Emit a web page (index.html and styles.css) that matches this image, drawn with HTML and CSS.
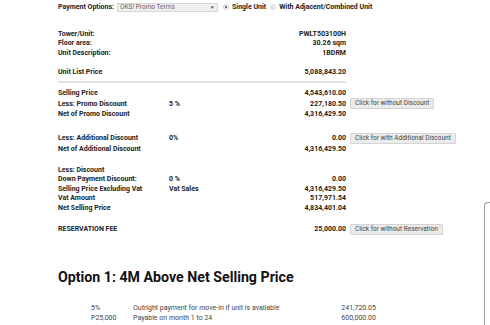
FILE: index.html
```html
<!DOCTYPE html>
<html>
<head>
<meta charset="utf-8">
<link rel="stylesheet" href="styles.css">
</head>
<body>
<div class="page">
  <div class="topbar">
    <span class="b">Payment Options:</span>
    <span class="select"><span class="sel-text">OKS! Promo Terms</span><span class="arrow">&#9662;</span></span>
    <span class="radio checked"></span>
    <span class="b">Single Unit</span>
    <span class="radio"></span>
    <span class="b">With Adjacent/Combined Unit</span>
  </div>

  <div class="sheet">
    <div class="row"><span>Tower/Unit:</span><span></span><span class="v">PWLT503100H</span></div>
    <div class="row"><span>Floor area:</span><span></span><span class="v">30.26 sqm</span></div>
    <div class="row"><span>Unit Description:</span><span></span><span class="v">1BDRM</span></div>
    <div class="row"></div>
    <div class="row"><span>Unit List Price</span><span></span><span class="v">5,088,843.20</span></div>
    <div class="rule"></div>
    <div class="row"><span>Selling Price</span><span></span><span class="v">4,543,610.00</span></div>
    <div class="row tall"><span>Less: Promo Discount</span><span>5 %</span><span class="v">227,180.50</span><span><button class="btn">Click for without Discount</button></span></div>
    <div class="row"><span>Net of Promo Discount</span><span></span><span class="v">4,316,429.50</span></div>
    <div class="row spacer"></div>
    <div class="row tall"><span>Less: Additional Discount</span><span>0%</span><span class="v">0.00</span><span><button class="btn">Click for with Additional Discount</button></span></div>
    <div class="row"><span>Net of Additional Discount</span><span></span><span class="v">4,316,429.50</span></div>
    <div class="row gap"></div>
    <div class="row"><span>Less: Discount</span></div>
    <div class="row"><span>Down Payment Discount:</span><span>0 %</span><span class="v">0.00</span></div>
    <div class="row"><span>Selling Price Excluding Vat</span><span>Vat Sales</span><span class="v">4,316,429.50</span></div>
    <div class="row"><span>Vat Amount</span><span></span><span class="v">517,971.54</span></div>
    <div class="row"><span>Net Selling Price</span><span></span><span class="v">4,834,401.04</span></div>
    <div class="row gap2"></div>
    <div class="row tall"><span>RESERVATION FEE</span><span></span><span class="v">25,000.00</span><span><button class="btn">Click for without Reservation</button></span></div>
  </div>

  <h2 class="heading">Option 1: 4M Above Net Selling Price</h2>

  <div class="terms">
    <div class="trow"><span>5%</span><span>Outright payment for move-in if unit is available</span><span class="v">241,720.05</span></div>
    <div class="trow"><span>P25,000</span><span>Payable on month 1 to 24</span><span class="v">600,000.00</span></div>
    <div class="trow"><span>P30,000</span><span>Payable on month 25 to 48</span><span class="v">720,000.00</span></div>
  </div>
</div>
<div class="side-frame"></div>
</body>
</html>
```

FILE: styles.css
```css
html, body {
  margin: 0;
  padding: 0;
  background: #fff;
  overflow: hidden;
}
body {
  font-family: Roboto, "Liberation Sans", Arial, sans-serif;
  color: #222;
  width: 490px;
  height: 325px;
  position: relative;
}
.page {
  padding: 2px 0 0 58px;
}
.b {
  font-weight: 700;
}
.topbar {
  display: flex;
  align-items: center;
  height: 10px;
  font-size: 7px;
  white-space: nowrap;
}
.select {
  display: flex;
  align-items: center;
  justify-content: space-between;
  box-sizing: border-box;
  width: 101px;
  height: 9px;
  margin-left: 3px;
  padding: 0 3px 0 2px;
  background: #efefef;
  border: 1px solid #d6d6d6;
  color: #666;
  font-size: 6.5px;
}
.arrow {
  font-size: 5px;
  color: #333;
}
.radio {
  width: 6px;
  height: 6px;
  border-radius: 50%;
  box-sizing: border-box;
  background: #e4e4e4;
  margin: 0 3px 0 4px;
}
.radio.checked {
  background: #fff;
  border: 1px solid #ccc;
  position: relative;
  margin-left: 5px;
}
.radio.checked::after {
  content: "";
  position: absolute;
  left: 1px;
  top: 1px;
  width: 2px;
  height: 2px;
  border-radius: 50%;
  background: #333;
}
.sheet {
  margin-top: 17px;
  font-size: 7px;
  font-weight: 700;
}
.row {
  display: grid;
  grid-template-columns: 111px 70px 107px auto;
  align-items: center;
  height: 9.6px;
  white-space: nowrap;
}
.row.tall {
  height: 12px;
}
.row.spacer {
  height: 13px;
}
.row.gap {
  height: 11px;
}
.row.gap2 {
  height: 10.6px;
}
.v {
  text-align: right;
}
.rule {
  width: 288px;
  height: 2px;
  background: #e2e2e2;
  margin: 4px 0 5px;
}
.btn {
  margin-left: 4px;
  height: 11px;
  padding: 0 4px;
  font-family: Roboto, "Liberation Sans", Arial, sans-serif;
  font-size: 6.5px;
  font-weight: 400;
  color: #444;
  background: #ebebeb;
  border: 1px solid #d4d4d4;
  border-radius: 1px;
  line-height: 9px;
  display: block;
}
.heading {
  margin: 34px 0 0;
  font-size: 14.2px;
  line-height: 16px;
  font-weight: 700;
  color: #111;
}
.terms {
  margin-top: 18px;
  padding-left: 33px;
  font-size: 7px;
  color: #444;
}
.trow {
  display: grid;
  grid-template-columns: 42px 180px 63px;
  grid-template-rows: 10px;
  align-items: center;
  width: 285px;
  white-space: nowrap;
}
.side-frame {
  position: absolute;
  left: 484px;
  top: 202px;
  width: 5px;
  height: 123px;
  border-left: 1px solid #9a9a9a;
  border-top: 1px solid #9a9a9a;
  border-top-left-radius: 4px;
}
```
